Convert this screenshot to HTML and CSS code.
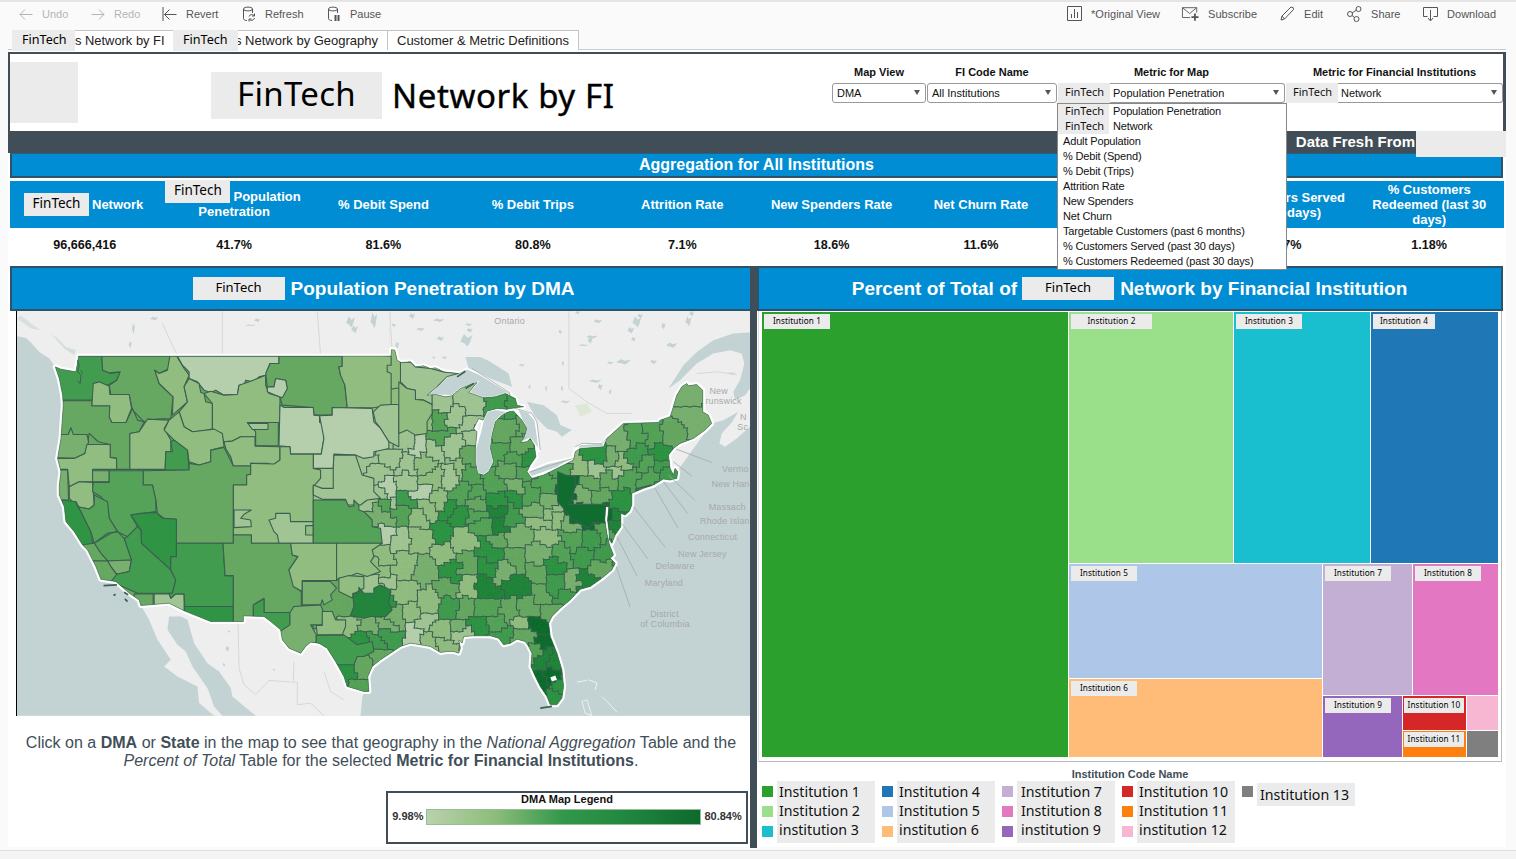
FILE: index.html
```html
<!DOCTYPE html>
<html lang="en">
<head>
<meta charset="utf-8">
<title>FinTech Network by FI</title>
<link rel="stylesheet" href="styles.css">
</head>
<body>
<header class="toolbar">
  <div class="tool off"><svg width="14" height="14" viewBox="0 0 14 14"><path d="M13.5 7.5H1M6 2.500L1 7.500L6 12.500"/></svg><span class="w-undo">Undo</span></div>
  <div class="tool off"><svg width="14" height="14" viewBox="0 0 14 14"><path d="M.5 7.500H13M8 2.500L13 7.500L8 12.500"/></svg><span class="w-redo">Redo</span></div>
  <div class="tool"><svg width="15" height="14" viewBox="0 0 15 14"><path d="M1 0V14M14.500 7.500H2.500M7.500 2.500L2.500 7.500L7.500 12.500"/></svg><span class="w-revert">Revert</span></div>
  <div class="tool"><svg width="14" height="16" viewBox="0 0 14 16"><path d="M5 14.500C2.500 14.500 1.500 13.500 1.500 12.500V3C1.500 .5 10.500 .5 10.500 3V7M1.500 3C1.500 5.500 10.500 5.500 10.500 3M7 10.500A3 3 0 0 1 12 9.500M12.500 7.500V10H10M12.500 12A3 3 0 0 1 7.500 13.500M7 15.500V13H9.500"/></svg><span class="w-refresh">Refresh</span></div>
  <div class="tool"><svg width="14" height="16" viewBox="0 0 14 16"><path d="M5 14.500C2.500 14.500 1.500 13.500 1.500 12.500V3C1.500 .5 10.500 .5 10.500 3V7M1.500 3C1.500 5.500 10.500 5.500 10.500 3"/><path class="fat" d="M8.500 9V15M11.500 9V15"/></svg><span>Pause</span></div>
  <div class="tools-right">
    <div class="tool"><svg width="15" height="15" viewBox="0 0 15 15"><path d="M.5 .5H14.500V14.500H.5ZM4.500 12V8M7.500 12V3M10.500 12V6"/></svg><span class="w-view">*Original View</span></div>
    <div class="tool"><svg width="17" height="15" viewBox="0 0 19 16"><path d="M9 12.500H.5V1.500H16.500V7M.5 1.500L8.500 8L16.500 1.500"/><path class="fat" d="M14.500 8V16M10.500 12H18.500"/></svg><span class="w-subscribe">Subscribe</span></div>
    <div class="tool"><svg width="15" height="15" viewBox="0 0 15 15"><path d="M1 14L2 10L11 1Q14 1 13.500 3.500L4.500 13ZM2 10L4.500 13"/></svg><span class="w-edit">Edit</span></div>
    <div class="tool"><svg width="15" height="16" viewBox="0 0 15 16"><circle cx="3" cy="8" r="2.500"/><circle cx="11.500" cy="3" r="2.500"/><circle cx="9.500" cy="13" r="2.500"/><path d="M5 7L9.500 4M5 9.500L7.500 11.500"/></svg><span class="w-share">Share</span></div>
    <div class="tool"><svg width="15" height="16" viewBox="0 0 15 16"><path d="M4.500 10.500H.5V1.500H14.500V10.500H10.500M7.500 4V14M5 12L7.500 15L10 12"/></svg><span>Download</span></div>
  </div>
</header>

<nav class="tabs">
  <a class="tab t1"><b>FinTech</b>s Network by FI</a>
  <a class="tab t2"><b>FinTech</b>s Network by Geography</a>
  <a class="tab t3">Customer &amp; Metric Definitions</a>
</nav>

<main class="board">
  <section class="head">
    <div class="logo"></div>
    <h1><span class="tag">FinTech</span><span class="ttl">Network by FI</span></h1>
    <div class="filters">
      <label class="f1">Map View<span class="select">DMA</span></label>
      <label class="f2">FI Code Name<span class="select">All Institutions</span></label>
      <label class="f3">Metric for Map<span class="select ft"><em>FinTech</em>Population Penetration</span></label>
      <label class="f4">Metric for Financial Institutions<span class="select ft"><em>FinTech</em>Network</span></label>
    </div>
    <ul class="menu">
      <li><em>FinTech</em>Population Penetration</li>
      <li><em>FinTech</em>Network</li>
      <li>Adult Population</li>
      <li>% Debit (Spend)</li>
      <li>% Debit (Trips)</li>
      <li>Attrition Rate</li>
      <li>New Spenders</li>
      <li>Net Churn</li>
      <li>Targetable Customers (past 6 months)</li>
      <li>% Customers Served (past 30 days)</li>
      <li>% Customers Redeemed (past 30 days)</li>
    </ul>
  </section>
  <div class="fresh"><span>Data Fresh From</span><i class="patch"></i></div>
  <h2 class="agg">Aggregation for All Institutions</h2>
  <div class="kpis names">
    <div class="withtag"><em>FinTech</em>Network</div>
    <div class="pop"><em>FinTech</em><span><s></s>Population<br>Penetration</span></div>
    <div>% Debit Spend</div>
    <div>% Debit Trips</div>
    <div>Attrition Rate</div>
    <div>New Spenders Rate</div>
    <div>Net Churn Rate</div>
    <div></div>
    <div>% Customers Served<br>(last 30 days)</div>
    <div>% Customers<br>Redeemed (last 30<br>days)</div>
  </div>
  <div class="kpis values">
    <div>96,666,416</div><div>41.7%</div><div>81.6%</div><div>80.8%</div><div>7.1%</div><div>18.6%</div><div>11.6%</div><div></div><div class="clip">7%</div><div>1.18%</div>
  </div>

  <div class="cols">
    <section class="left">
      <h3><em>FinTech</em>Population Penetration by DMA</h3>
      <svg class="map" id="map" viewBox="18 18 2202 1215" width="734" height="405"></svg>
      <p class="hint">Click on a <b>DMA</b> or <b>State</b> in the map to see that geography in the <i>National Aggregation</i> Table and the<br><i>Percent of Total</i> Table for the selected <b>Metric for Financial Institutions</b>.</p>
      <div class="legend">
        <h4>DMA Map Legend</h4>
        <div class="scale"><span>9.98%</span><i></i><span>80.84%</span></div>
      </div>
    </section>
    <section class="right">
      <h3>Percent of Total of<em>FinTech</em>Network by Financial Institution</h3>
      <div class="treebox">
        <div class="tree">
          <div class="c1"><span>Institution 1</span></div>
          <div class="c2"><span class="wide">Institution 2</span></div>
          <div class="c3"><span>Institution 3</span></div>
          <div class="c4"><span class="narrow">Institution 4</span></div>
          <div class="c5"><span>Institution 5</span></div>
          <div class="c6"><span>Institution 6</span></div>
          <div class="c7"><span>Institution 7</span></div>
          <div class="c8"><span>Institution 8</span></div>
          <div class="c9"><span>Institution 9</span></div>
          <div class="c10"><span>Institution 10</span></div>
          <div class="c11"><span>Institution 11</span></div>
          <div class="c12"></div>
          <div class="c13"></div>
        </div>
      </div>
      <h5>Institution Code Name</h5>
      <div class="codes">
        <div><ul><li class="c1"></li><li class="c2"></li><li class="c3"></li></ul><p>Institution 1<br>Institution 2<br>institution 3</p></div>
        <div><ul><li class="c4"></li><li class="c5"></li><li class="c6"></li></ul><p>Institution 4<br>Institution 5<br>institution 6</p></div>
        <div><ul><li class="c7"></li><li class="c8"></li><li class="c9"></li></ul><p class="inset">Institution 7<br>Institution 8<br>institution 9</p></div>
        <div><ul><li class="c10"></li><li class="c11"></li><li class="c12"></li></ul><p>Institution 10<br>Institution 11<br>institution 12</p></div>
        <div><ul><li class="c13"></li></ul><p class="one">Institution 13</p></div>
      </div>
    </section>
  </div>
</main>
<footer></footer>
<script src="map.js"></script>
</body>
</html>
```
FILE: styles.css
```css
* { box-sizing: border-box; margin: 0; padding: 0; }
body { width: 1516px; height: 859px; overflow: hidden; background: #fafafa; font-family: "Liberation Sans", Arial, sans-serif; color: #111; }
em { font-style: normal; font-family: "Noto Sans", sans-serif; }
ul { list-style: none; }

.toolbar { height: 30px; border-top: 2px solid #e4e4e4; display: flex; padding: 0 20px 5px 19px; align-items: center; font-size: 11px; color: #555; }
.tool { display: flex; align-items: center; gap: 9px; white-space: nowrap; }
.tool svg { fill: none; stroke: #555; stroke-width: 1; overflow: visible; }
.tool .fat { stroke-width: 2; }
.tool.off { color: #b5b5b5; }
.tool.off svg { stroke: #b5b5b5; }
.tool > span { display: block; margin-top: 1px; }
.w-undo { width: 49px; }
.w-redo { width: 50px; }
.w-revert { width: 56px; }
.w-refresh { width: 62px; }
.w-view { width: 91px; }
.w-subscribe { width: 72px; }
.w-edit { width: 43px; }
.w-share { width: 52px; }
.tool.off + .tool:not(.off) { margin-left: -2px; }
.tools-right { display: flex; margin-left: auto; }

.tabs { height: 20px; padding-left: 12px; display: flex; font-size: 13px; color: #222; }
.tab { display: flex; align-items: center; height: 20px; border: 1px solid #c4c4c4; border-width: 1px 1px 0 0; background: #fff; white-space: pre; }
.tab b { position: relative; z-index: 1; font: 12.600px "Noto Sans", sans-serif; background: #ebebeb; height: 21px; line-height: 19px; padding-left: 10px; width: 63px; color: #000; }
.t1 { width: 161px; border-right: 0; font-size: 12.900px; }
.t2 { width: 215px; }
.t2 b { width: 65px; margin-right: -3px; }
.t3 { width: 191px; padding-left: 9px; }

.board { width: 1498px; height: 798px; margin: -1px 0 0 8px; background: #fff; border-top: 1px solid #ccc; padding-top: 2px; }
.head { position: relative; height: 79px; border: solid #414e57; border-width: 2px 3px 0 2px; display: flex; }
.logo { width: 68px; height: 61px; margin-top: 8px; background: #ebebeb; }
h1 { display: flex; align-items: center; margin: 18px 0 0 133px; height: 47px; font: 33px "Noto Sans", sans-serif; color: #000; }
.tag { background: #ebebeb; width: 171px; height: 47px; line-height: 44px; padding-left: 26px; letter-spacing: .3px; }
.ttl { padding-left: 10px; line-height: 44px; white-space: nowrap; letter-spacing: .6px; -webkit-text-stroke: .4px; }
.filters { position: absolute; left: 822px; top: 12px; display: flex; gap: 1px; }
.filters label { font-weight: bold; font-size: 11px; line-height: 13px; text-align: center; color: #111; }
.select { display: flex; align-items: center; margin-top: 4px; height: 20px; border: 1px solid #999; border-radius: 3px; background: #fff; padding-left: 4px; font-weight: normal; white-space: nowrap; }
.select::after { content: ""; margin: 0 5px 2px auto; border: solid transparent; border-width: 5px 3.500px 0; border-top-color: #555; }
.select.ft { padding-left: 0; border-left: 0; }
.select em { font-size: 11px; align-self: stretch; width: 52px; background: #ebebeb; text-align: left; padding: 1px 0 0 7px; margin: -1px 3px -1px 0; line-height: 15px; }
.f1 { width: 94px; }
.f2 { width: 130px; }
.f3 { width: 227px; }
.f4 { width: 217px; }
.menu { position: absolute; z-index: 5; left: 1047px; top: 49px; width: 230px; height: 167px; background: #fff; border: 1px solid #888; font-size: 11px; line-height: 15px; padding-left: 5px; white-space: nowrap; letter-spacing: -.15px; }
.menu li { height: 15px; display: flex; }
.menu em { width: 51px; margin: 0 4px 0 -5px; padding-left: 7px; background: #ebebeb; line-height: 13px; letter-spacing: 0; }

.fresh { height: 22px; background: #414e57; display: flex; justify-content: flex-end; color: #fff; font: bold 15px/21px "Liberation Sans", sans-serif; }
.patch { position: relative; z-index: 2; height: 26px; width: 90px; background: #ebebeb; margin-left: 1px; }
.agg { margin: 0 3px 0 2px; height: 25px; border: 2px solid #2d5369; border-top: 1px solid #28617f; background: #018dd3; color: #fff; text-align: center; font-size: 16px; line-height: 21px; }
.kpis { margin: 3px 2px 0; display: grid; grid-template-columns: repeat(10, 149.400px); font-weight: bold; font-size: 13px; text-align: center; line-height: 15px; align-items: center; }
.names { height: 47px; background: #018dd3; color: #fff; position: relative; }
.names em { display: inline-block; width: 65px; height: 23px; background: #ebebeb; color: #000; font: 13.500px/20px "Noto Sans", sans-serif; }
.withtag { display: flex; gap: 3px; padding-left: 14px; align-items: center; white-space: nowrap; }
.pop { position: relative; height: 47px; padding-top: 8px; }
.pop em { position: absolute; left: 6px; top: -1px; }
.pop s { display: inline-block; width: 66px; }
.values { height: 37px; margin-top: 0; font-size: 12.600px; color: #111; padding-bottom: 3px; }
.clip { padding-left: 25px; }

.cols { display: flex; margin: 1px 3px 0 2px; height: 582px; }
.cols h3 { height: 45px; background: #018dd3; border: 2px solid #2d5369; color: #fff; font-size: 19px; display: flex; align-items: center; justify-content: center; white-space: nowrap; }
.cols h3 em { font-size: 13px; font-weight: normal; background: #ebebeb; color: #000; width: 92px; height: 23px; line-height: 20px; text-align: center; margin: 0 6px 0 5px; }
.left { width: 747px; border-right: 7px solid #414e57; }
.left h3 { border-right: 0; padding-left: 0; }
.map { display: block; margin-left: 6px; background: #eee; border-left: 1px solid #000; }
.hint { margin-top: 17px; padding-left: 2px; text-align: center; font-size: 16.050px; line-height: 18px; color: #414e57; white-space: nowrap; }
.legend { width: 362px; height: 53px; margin: 22px 2px 0 auto; border: 2px solid #414e57; text-align: center; }
.legend h4 { font-size: 11px; line-height: 13px; }
.scale { display: flex; font-size: 11px; line-height: 15px; justify-content: center; font-weight: bold; gap: 3px; margin-top: 3px; color: #333; }
.scale i { width: 275px; height: 16px; border: 1px solid #9b9; background: linear-gradient(90deg, #b9d2ac, #8cbd7a 25%, #31974a 50%, #238a41 70%, #0d6a2d); }

.right { width: 746px; }
.right h3 { padding-right: 1px; }
.treebox { height: 451px; margin: 0 1px; padding: 1px 3px 0; border: 1px solid #bbb; border-top: 0; border-left-color: #ddd; }
.tree { height: 445px; width: 736px; display: grid; gap: 1px; grid-template-columns: 306px 164px 88px 47px 31px 9px 53px 31px; grid-template-rows: 251px 114px 16px 34px 26px; }
.tree > div { padding: 2px; overflow: hidden; }
.tree span { display: block; width: 66px; height: 15px; background: #ebebeb; font: 8.200px/13px "Noto Sans", sans-serif; letter-spacing: .1px; color: #000; text-align: center; white-space: nowrap; }
.tree .wide { width: 81px; }
.tree .narrow { width: 62px; }
.c1 { background: #2ca02c; }
.c2 { background: #9adf8a; }
.c3 { background: #1abfcf; }
.c4 { background: #2077b5; }
.c5 { background: #aec6e7; }
.c6 { background: #ffbb78; }
.c7 { background: #c4afd4; }
.c8 { background: #e377c2; }
.c9 { background: #9467bd; }
.c10 { background: #d62728; }
.c11 { background: #ff7f0e; }
.c12 { background: #f7b6d2; }
.c13 { background: #7f7f7f; }
.tree .c1 { grid-area: 1 / 1 / 6 / 2; }
.tree .c2 { grid-area: 1 / 2; }
.tree .c3 { grid-area: 1 / 3 / 2 / 5; }
.tree .c4 { grid-area: 1 / 5 / 2 / 9; }
.tree .c5 { grid-area: 2 / 2 / 3 / 4; }
.tree .c6 { grid-area: 3 / 2 / 6 / 4; }
.tree .c7 { grid-area: 2 / 4 / 4 / 7; }
.tree .c8 { grid-area: 2 / 7 / 4 / 9; }
.tree .c9 { grid-area: 4 / 4 / 6 / 6; }
.tree .c10 { grid-area: 4 / 6 / 5 / 8; padding: 2px 1px; }
.tree .c11 { grid-area: 5 / 6 / 6 / 8; padding: 1px; }
.tree .c10 span, .tree .c11 span { width: 60px; }
.tree .c12 { grid-area: 4 / 8; }
.tree .c13 { grid-area: 5 / 8; }
.right h5 { font-size: 11px; line-height: 13px; margin-top: 6px; color: #414e57; text-align: center; }
.codes { display: flex; padding-left: 5px; margin-top: -1px; }
.codes > div { width: 120px; display: flex; gap: 4px; }
.codes ul { padding-top: 6px; }
.codes li { width: 11px; height: 11px; margin-bottom: 9px; }
.codes p { width: 98px; height: 62px; margin-top: 1px; padding-left: 2px; background: #ebebeb; font: 14.200px/19.700px "Noto Sans", sans-serif; line-height: 19px; padding-top: 1px; white-space: nowrap; color: #111; }
.codes .inset { padding-left: 4px; }
.codes .one { height: 23px; margin-top: 3px; padding-left: 3px; line-height: 21px; }
footer { height: 10px; margin-top: 3px; border-top: 1px solid #ddd; background: #f4f4f4; }

.land-halo { fill: #fff; stroke: #fff; stroke-width: 15; stroke-linejoin: round; }
.water { fill: #c3d2d3; }
.lake { fill: #c3d2d3; stroke: #fff; stroke-width: 5; }
.edge { fill: none; stroke: #3b5f50; stroke-width: 3; stroke-linejoin: round; }
.dma { stroke: #3b5f50; stroke-width: 3.300; stroke-linejoin: round; }
.leader { fill: none; stroke: #a3acac; stroke-width: 2.500; }
.border-line { fill: none; stroke: #d6d8d8; stroke-width: 3; }
.place { fill: #a6aaab; font: 27px "Liberation Sans", sans-serif; letter-spacing: .5px; }
```
FILE: map.js
```js
// Map units are thirds of a pixel.
var svg = document.getElementById('map');
var fills = ['#b5cfac', '#a0c493', '#92bd80', '#79b070', '#66a862', '#55a358', '#429c4f', '#2f9444', '#22853b', '#0f6d2f'];

function pts(text, dx, dy) {
  return text.trim().split(/\s+/).map(function (p) {
    var q = p.split(',');
    return [+q[0] + (dx || 0), +q[1] + (dy || 0)];
  });
}
function path(list, open) { return 'M' + list.map(function (p) { return p.join(' '); }).join('L') + (open ? '' : 'Z'); }
var out = '';
function draw(d, cls, extra) { out += '<path class="' + cls + '" d="' + d + '" ' + (extra || '') + '/>'; }

// Coastline and land borders of the lower 48, clockwise from Puget Sound.
var usa = pts('203,153 1140,153')
  .concat(pts('32,150 33,133 43,135 50,165 62,172 90,170 105,185 130,182 150,190 165,188 190,200 235,205 200,215 175,240 140,270 165,268 195,275 215,272 240,250 270,238 290,232 265,262 310,278 345,275 375,265 405,280 410,300 430,305 410,307 380,312 350,310 320,318 308,345 295,340 280,370 290,380 285,430 285,470 292,505 310,510 325,500 340,470 330,430 335,390 345,350 365,330 385,320 400,318 425,345 440,370 430,400 420,412 440,410 450,400 462,420 467,455 450,480 440,500 455,520 490,510 530,490 580,465 585,440 600,430 670,425 680,400 730,355 835,352 840,345 870,335 875,320 890,270 905,245 920,235 925,242 950,238 968,255 968,320 985,330 995,355 975,375 940,400 900,415 880,430 865,450 870,490 880,510 885,490 893,500 890,520 870,525 850,522 820,540 790,550 755,565 755,600 748,618 735,630 722,625', 1110, 0))
  .concat(pts('722,45 722,80 705,105 695,130 688,120 686,90 682,60 686,20 676,20 674,60 680,100 688,135 700,165 690,175 705,190 695,210 665,235 630,260 600,268 570,300 540,325 515,350 505,370 510,410 530,460 545,510 550,560 545,595 530,615 510,615 500,590 480,560 465,530 452,500 455,460 445,440 435,425 410,418 390,430 370,435 355,415 330,408 280,408 250,410 245,430 235,420 240,445 235,460 220,455 200,455 180,458 150,440 120,435 90,430 60,440 30,460', 1110, 585))
  .concat(pts('1110,480 1085,500 1072,530 1075,575 1060,575 1010,560 1000,530 975,485 950,445 925,430 900,427 885,440 870,460 835,445 815,420 810,390 780,365 760,350 698,348 698,365 600,365 520,333 475,310 390,317 385,300 355,280 315,245 270,238 255,200 230,150 215,135 190,95 165,65 160,20', 0, 585))
  .concat(pts('145,570 145,540 150,500 140,460 150,400 157,300 155,270 145,220 133,185 150,192 195,200'));
out += '<defs><clipPath id="us"><path d="' + path(usa) + '"/></clipPath></defs>';

// Oceans and large bodies of water
draw(path(pts('18,93 45,98 62,115 85,140 115,160 133,185 300,500 400,900 390,902 415,945 440,1005 480,1065 460,1085 500,1115 560,1145 565,1195 610,1233 18,1233')), 'water');
draw(path(pts('475,935 510,935 530,945 550,1015 590,1075 625,1100 660,1150 665,1175 735,1233 635,1233 610,1205 590,1150 545,1085 525,1040 500,1020 470,975')), 'water');
draw(path(pts('1072,1115 1200,800 2000,500 2105,355 2140,345 2185,320 2165,352 2135,385 2128,415 2145,425 2180,400 2220,365 2220,1233 1050,1233 1055,1180')), 'water');
draw(path(pts('2220,82 2170,85 2110,105 2060,140 2020,180 1975,250 2010,225 2060,175 2110,145 2160,135 2195,145 2203,175 2190,225 2170,260 2175,285 2205,270 2220,250')), 'water');
draw(path(pts('1365,155 1410,155 1440,170 1495,205 1505,245 1440,220 1375,190')), 'water');
draw(path(pts('1550,290 1600,300 1640,330 1650,360 1685,375 1655,395 1640,380 1610,370 1575,335')), 'water');
draw(path(pts('18,40 60,70 90,75 60,55 30,30')), 'water', 'opacity=".5"');
draw(path(pts('120,85 160,130 190,150 195,135 165,125 140,100')), 'water', 'opacity=".6"');

// Scattered northern lakes: x, y, width, height
'368,70,9,35 358,118,9,22 740,45,18,12 720,60,36,5 1020,50,26,34 1032,72,20,24 1090,45,20,50 1205,32,18,18 1230,72,26,10 1285,45,34,10 1290,100,22,14 1378,75,18,14 1368,105,36,38 1375,58,22,8 1270,157,10,8 1302,157,16,8 1535,180,20,8 1650,80,10,14 1763,48,26,12 1745,95,36,10 1740,105,14,22 1840,170,44,16 1800,173,20,8 1880,50,26,34 1862,75,20,20 1870,102,14,14 1930,170,20,14 1985,120,34,16 1960,62,12,22 2035,48,18,30 2045,25,14,18 1755,228,38,10 1770,245,14,20 1658,175,8,16 1608,250,6,20 1702,22,14,10 1558,245,8,14 1655,250,7,18 1665,290,30,8 1800,260,9,16 1720,120,30,6 1160,120,12,22 1150,60,14,10 2165,205,24,8 655,980,8,8 650,1032,12,18 640,1080,8,12 790,1095,10,6 430,40,24,12 1890,32,16,14'.split(' ').forEach(function (s) {
  var q = s.split(',').map(Number), x = q[0], y = q[1], w = q[2] / 2, h = q[3] / 2;
  draw('M' + [x - w, y + h * .2] + 'L' + [x - w * .4, y - h] + 'L' + [x + w * .2, y - h * .4] + 'L' + [x + w, y - h * .8] + 'L' + [x + w * .6, y + h * .3] + 'L' + [x + w * .2, y + h] + 'L' + [x - w * .3, y + h * .5] + 'Z', 'water');
});
draw('M635 18V150M455 55L480 110L500 150M920 18L930 150M1138 18L1145 140M1676 18V250L1730 290L1790 325L1865 325M2060 205L2120 200L2180 208M682 950L685 1090L700 1140L735 1170L775 1127L860 1133L860 1200L900 1195L940 1233M850 1070L848 1130M940 1100L960 1160L1000 1185', 'border-line');
draw('M1695 300L1730 295L1745 320L1710 335ZM1135 60L1142 55L1138 120Z', '', 'fill="#dfe8d6"');

draw(path(usa), 'land-halo');
// Great Lakes along the northern edge
draw(path(pts('140,270 200,215 260,190 300,208 390,262 400,275 375,265 345,275 310,278 265,262 290,232 240,250 215,272', 1110, 0)), 'lake');
draw(path(pts('320,318 350,312 385,320 365,330 345,350 335,390 330,430 340,470 325,500 310,510 292,505 285,470 285,430 300,380 308,345', 1110, 0)), 'lake');
draw(path(pts('410,310 445,322 465,345 478,440 462,415 450,400 420,412 440,370 425,345', 1110, 0)), 'lake');
draw(path(pts('440,500 500,475 585,455 530,488 455,515', 1110, 0)), 'lake');
draw(path(pts('585,430 600,418 670,412 670,425 600,430', 1110, 0)), 'lake');
draw('M1385 190L1498 262V275M1510 308L1565 325L1580 350L1590 435M1560 500L1690 460M1695 425L1715 415H1775L1795 395', 'leader');

// Market areas east of the plains: x, y, shade
var seeds = [];
function sow(text, dx, dy) {
  text.split(' ').forEach(function (s) { var q = s.split(',').map(Number); seeds.push([q[0] + dx, q[1] + dy, q[2]]); });
}
sow('110,210,1 50,300,2 90,310,2 130,340,2 180,285,1 270,285,1 350,285,6 400,290,6 215,330,1 170,350,5 175,390,5 255,350,1 270,390,1 215,420,1 60,400,1 20,400,1 115,410,0 150,425,1 20,450,1 75,475,1 75,530,1 130,470,2 150,510,2 200,510,1 230,490,2 265,440,4 260,500,5 120,555,0 10,540,0 160,580,2 240,560,5 60,585,6 35,595,1 110,630,2 200,620,7 290,560,5 340,590,7 290,620,5 400,580,7 405,545,3 380,370,4 355,440,5 425,355,4 410,420,4 395,460,5 445,450,7 370,500,4 330,530,5 430,510,5 480,540,5 440,560,5 505,580,3 450,620,3 530,625,2 558,535,9 558,580,9 545,505,5 600,480,2 635,450,7 645,490,1 690,450,3 718,465,2 700,490,1 705,390,3 770,385,5 810,385,5 755,445,6 800,475,5 835,440,7 840,480,6 800,510,5 850,505,6 865,385,4 930,330,3 925,260,3 745,520,5 670,515,4 640,530,4 605,570,3 650,575,4 720,585,7 620,630,9 660,620,9 580,630,9 700,640,8', 1110, 0);
sow('10,40,3 60,40,5 130,30,2 40,115,1 15,170,2 120,110,2 215,45,7 180,90,7 285,25,4 300,75,5 350,75,8 345,30,8 400,40,6 345,120,4 410,100,3 470,65,2 520,30,2 490,110,2 560,60,3 565,120,5 630,110,6 660,85,5 615,35,9 655,35,9 700,60,8 240,120,2 180,165,2 130,200,3 65,190,2 60,270,2 210,210,7 200,265,4 250,260,2 260,185,4 320,155,7 310,185,7 310,260,8 410,250,8 400,170,4 375,200,3 460,220,4 465,145,3 525,195,7 540,160,5 600,170,6 660,195,4 670,150,6 570,240,3 605,240,8 520,255,6 480,280,4 550,280,6 440,320,4 380,330,4 315,320,5 250,320,4 200,320,6 145,310,2 80,330,2 35,350,3 20,400,6 -20,430,6 100,400,0 125,370,1 170,390,2 140,410,2 200,430,2 230,370,3 240,400,1 285,370,7 345,360,5 360,395,6 425,355,2 425,400,4 500,330,4 480,375,9 490,410,9 455,450,5 485,470,8 525,480,8 480,540,9 500,530,9 535,550,7 530,595,7 5,300,7 20,240,1', 1110, 585);
sow('1050,470,1 1100,500,1 1090,560,1 1130,600,5 1125,690,0 1000,895,4 1060,955,3 1045,985,7 1050,1080,4 1000,1100,7 1040,1150,5 1090,1045,4 1110,790,2 1080,830,1 1010,960,2 1130,960,3 1140,180,2', 0, 0);

// Counties sit on a square grid, which gives the areas their stair-like edges.
var step = 9, x0 = 870, y0 = 125, nx = 142, ny = 123, own = [];
function jitter(a, b, k) {
  var v = Math.sin(a * 127.1 + b * 311.7 + k * 74.7) * 43758.5453;
  return v - Math.floor(v) - .5;
}
function owner(i, j) {
  var bi = Math.floor(i / 2), bj = Math.floor((j + (bi % 2)) / 2);
  var wx = x0 + i * step + 22 * jitter(bi, bj, 1);
  var wy = y0 + j * step + 22 * jitter(bi, bj, 2);
  var best = 0, bd = 1e9;
  for (var s = 0; s < seeds.length; s++) {
    var dx = Math.abs(seeds[s][0] - wx), dy = Math.abs(seeds[s][1] - wy);
    var d = Math.pow(dx, 2.6) + Math.pow(dy, 2.6);
    if (d < bd) { bd = d; best = s; }
  }
  return best;
}
for (var j = 0; j < ny; j++) {
  own.push([]);
  for (var i = 0; i < nx; i++) own[j].push(owner(i, j));
}
// Absorb stray cells into the area around them.
for (var pass = 0; pass < 3; pass++) {
  for (j = 1; j < ny - 1; j++) {
    for (i = 1; i < nx - 1; i++) {
      var around = [own[j - 1][i], own[j + 1][i], own[j][i - 1], own[j][i + 1]];
      if (around.filter(function (v) { return v === own[j][i]; }).length < 2) {
        var pick = around.filter(function (v, n) { return around.indexOf(v) !== n; })[0];
        if (pick !== undefined) own[j][i] = pick;
      }
    }
  }
}
var nodes = [];
for (j = 0; j <= ny; j++) {
  nodes.push([]);
  for (i = 0; i <= nx; i++) nodes[j].push([(x0 + i * step + 4 * jitter(i, j, 5)).toFixed(1), (y0 + j * step + 4 * jitter(i, j, 6)).toFixed(1)]);
}
var areas = fills.map(function () { return ''; }), edges = '';
for (j = 0; j < ny; j++) {
  for (i = 0; i < nx; i++) {
    var a = nodes[j][i], b = nodes[j][i + 1], c = nodes[j + 1][i + 1], e = nodes[j + 1][i];
    if (i + 1 < nx && own[j][i] !== own[j][i + 1]) edges += 'M' + b + 'L' + c;
    if (j + 1 < ny && own[j][i] !== own[j + 1][i]) edges += 'M' + e + 'L' + c;
    areas[seeds[own[j][i]][2]] += 'M' + a + 'L' + b + 'L' + c + 'L' + e + 'Z';
  }
}
out += '<g clip-path="url(#us)"><rect x="100" y="120" width="2100" height="1100" fill="#66a862"/>';
areas.forEach(function (d, k) { if (d) draw(d, '', 'fill="' + fills[k] + '" stroke="' + fills[k] + '"'); });
draw(edges, 'edge', 'stroke-linecap="round"');

// Western market areas
[
  [6, '203,153 273,153 275,195 300,205 328,200 318,225 290,240 255,232 243,285 157,285 120,285 120,150'],
  [4, '273,153 477,153 475,190 445,205 432,195 445,235 487,275 480,340 440,342 400,350 365,315 355,268 300,268 295,240 318,225 328,200 295,203 275,195'],
  [4, '157,287 243,287 243,302 297,302 297,335 303,352 345,352 365,310 380,345 400,350 385,380 357,385 357,493 317,493 317,460 298,457 298,418 262,410 235,385 230,415 228,388 185,388 180,370 172,388 140,390 140,287'],
  [2, '247,235 265,230 295,243 297,268 355,268 362,310 345,352 303,352 295,335 297,302 243,302'],
  [3, '130,388 172,388 180,368 187,388 228,388 233,410 222,445 190,460 130,458'],
  [2, '130,460 190,460 222,445 228,418 298,418 298,457 317,460 317,493 245,493 245,530 205,530 175,545 170,493 130,493'],
  [3, '245,497 295,497 295,530 245,530'],
  [3, '130,495 170,495 173,585 130,585'],
  [2, '175,545 205,530 245,532 250,600 235,612 200,605 175,580'],
  [2, '357,385 385,380 410,342 475,345 460,370 480,405 480,440 465,440 463,493 357,493'],
  [2, '477,153 498,153 520,190 535,210 520,245 530,290 485,330 487,275 445,235 432,195 445,205 470,195'],
  [0, '500,153 805,153 805,175 778,175 765,210 745,215 735,225 720,228 705,225 700,240 685,240 680,268 640,270 615,255 600,262 580,255 560,230 535,220 535,200 515,180'],
  [2, '535,220 565,235 570,262 580,265 585,290 605,295 605,372 575,378 545,380 520,365 505,320 530,290 520,245'],
  [2, '600,258 640,270 680,268 685,240 720,228 765,210 765,240 775,265 808,275 808,352 710,352 735,375 735,395 690,395 665,408 640,410 630,385 605,372 605,295 580,265'],
  [2, '475,345 505,320 520,365 545,380 610,372 635,385 640,425 600,435 600,470 565,480 535,470 530,435 490,405 460,375'],
  [6, '465,440 485,440 480,410 490,405 530,435 535,495 463,495'],
  [4, '805,153 995,153 995,183 985,185 990,210 1003,213 1003,240 1010,307 965,307 965,330 910,330 908,307 815,300 808,275 830,250 825,225 795,220 790,245 770,245 765,205 778,175 805,175'],
  [0, '770,245 790,245 795,220 825,225 830,250 815,278 795,270 770,260'],
  [2, '995,140 1142,153 1142,180 1130,180 1130,200 1142,205 1142,298 1090,308 1010,307 1003,240 990,210 985,185 995,183'],
  [1, '1110,300 1142,298 1165,298 1165,425 1135,410 1110,370 1095,350 1088,320'],
  [1, '1170,172 1200,170 1215,185 1260,190 1300,200 1345,205 1310,215 1285,240 1265,268 1265,298 1240,285 1215,283 1215,255 1190,250 1170,230'],
  [2, '1165,230 1190,250 1215,255 1215,283 1240,285 1265,298 1265,325 1250,350 1250,385 1215,390 1190,375 1165,385'],
  [0, '808,300 820,307 908,307 910,330 927,332 927,352 940,355 940,400 932,447 840,447 838,425 805,422'],
  [3, '710,352 803,352 803,422 735,422 735,380'],
  [1, '712,355 772,355 772,373 725,373'],
  [2, '640,410 665,408 690,395 733,395 733,423 808,425 808,465 790,480 770,475 720,475 720,483 668,483 660,455 645,430'],
  [0, '927,332 965,330 965,307 1085,310 1090,350 1110,370 1135,410 1135,430 1090,440 1090,455 1060,460 1035,450 970,447 968,490 908,490 908,447 932,447 940,400'],
  [4, '535,475 565,480 600,470 600,435 640,427 668,483 720,483 720,508 708,510 708,540 668,540 668,715 497,715 497,643 460,640 440,625 435,585 425,540 397,540 397,497 535,495'],
  [2, '720,475 790,477 808,465 808,425 838,425 840,447 908,447 908,490 930,495 930,520 908,545 908,715 722,715 722,690 668,690 668,540 708,540 708,510 720,508'],
  [1, '670,615 722,615 700,628 690,640 720,645 722,665 670,668'],
  [1, '775,645 795,640 795,625 838,625 840,650 908,650 908,715 805,715 800,690 790,680'],
  [2, '885,662 908,662 908,690 885,690'],
  [1, '970,450 1035,450 1045,480 1055,510 1090,520 1090,560 1110,580 1070,585 1050,600 1010,600 1005,583 935,583 908,570 908,540 935,550 968,550 968,490'],
  [5, '908,585 1005,585 1015,605 1030,603 1030,585 1045,600 1045,615 1060,620 1085,645 1085,665 1110,670 1115,715 908,715'],
  [5, '295,497 397,497 397,540 425,540 435,585 435,620 360,630 380,665 350,695 320,680 295,640 290,600 270,575 245,560 247,532 295,532'],
  [7, '360,630 390,625 435,622 455,640 497,643 497,755 480,755 480,795 430,750 392,715 390,675'],
  [7, '155,585 195,590 215,630 240,680 245,715 215,725 180,690 150,650'],
  [5, '195,590 200,605 235,612 250,600 250,570 290,590 295,640 320,680 290,685 250,715 240,680 215,630'],
  [5, '250,715 300,685 320,680 340,700 362,765 290,768 270,745'],
  [4, '210,720 250,715 270,745 290,768 240,768'],
  [3, '290,768 362,765 355,800 318,808 300,785'],
  [4, '240,768 290,768 300,785 318,810 315,835 260,830'],
  [6, '350,695 380,665 390,675 392,715 430,750 480,795 495,825 485,865 430,865 380,865 300,830 318,808 355,800 362,765 340,700'],
  [4, '370,867 427,867 427,905 370,905'],
  [1, '430,867 475,867 480,880 495,867 520,867 520,925 430,925'],
  [6, '497,715 637,715 640,770 643,812 668,812 668,905 522,905 520,867 495,867 480,880 475,865 485,865 495,825 480,795 480,755 497,755'],
  [7, '522,905 668,905 668,960 600,960 520,930'],
  [4, '637,715 668,715 668,690 722,690 722,715 840,715 845,750 862,755 835,795 850,845 872,860 872,905 850,905 840,923 760,923 760,880 728,900 728,955 668,955 668,812 643,812'],
  [6, '728,900 760,882 760,923 838,923 838,960 800,1000 700,960 728,945'],
  [2, '840,715 978,715 978,827 875,827 875,860 848,845 835,795 862,755 845,750'],
  [3, '875,830 960,830 978,850 960,870 965,885 940,900 935,885 930,900 875,900'],
  [3, '838,923 850,905 930,900 938,920 935,960 900,960 917,990 917,1010 890,1060 800,1060 800,985 838,960'],
  [2, '978,715 1115,715 1085,735 1090,755 1080,770 1110,800 1070,815 1040,805 1015,815 985,820 978,827'],
  [2, '985,820 1015,812 1060,815 1060,850 1027,868 1027,880 985,860'],
  [2, '935,920 965,920 975,945 1005,945 1005,965 995,990 920,990 917,962 935,962'],
  [6, '917,992 1000,990 1020,1005 1040,1020 1085,1010 1090,1040 1060,1055 1040,1055 1030,1080 970,1080 917,1030'],
  [8, '1027,865 1045,865 1045,847 1060,865 1090,865 1090,850 1110,840 1140,855 1135,895 1145,915 1125,935 1080,935 1060,940 1020,932 1030,905'],
  // Western New York to Washington, D.C.
  [9, '1642,500 1665,510 1695,515 1695,545 1685,580 1675,598 1790,598 1785,625 1790,655 1750,652 1735,670 1705,655 1680,635 1660,610 1642,590']
].forEach(function (a) { draw(path(pts(a[1])), 'dma', 'fill="' + fills[a[0]] + '"'); });
out += '</g>';
draw(path(usa), 'edge', 'stroke-opacity=".55"');
draw('M200 165L205 180L200 200L210 210L208 235L200 228M210 195L215 205', 'edge');
draw('M1620 1118L1635 1112L1640 1125L1625 1130Z', '', 'fill="#fff"');
draw('M278 842L318 840M308 872L314 868M340 862L352 870M342 882L350 890M1590 1210L1625 1205M1875 553L1925 540M1340 215L1365 198M1365 250L1390 235', '', 'stroke="#3b5f50" stroke-width="5"');
draw('M1700 1132L1730 1127M1735 1125L1760 1135L1755 1155M1715 1190L1730 1185L1745 1233L1725 1225ZM1775 1175L1790 1190L1820 1222', 'edge', 'style="stroke:#eef1f0"');

draw('M1998 432L2105 472M1990 470L2045 513M1975 510L2055 587M1960 530L2033 626M1935 550L2003 668M1870 605L1965 727M1835 655L1913 762M1820 695L1880 812M1818 785L1860 907', 'leader');
[
  ['Ontario', 1452, 56], ['New', 2098, 267], ['runswick', 2086, 297], ['N', 2190, 346], ['Sc', 2182, 376],
  ['Vermo', 2136, 501], ['New Han', 2104, 546], ['Massach', 2096, 615], ['Rhode Islan', 2070, 657],
  ['Connecticut', 2034, 705], ['New Jersey', 2004, 757], ['Delaware', 1936, 792], ['Maryland', 1904, 844],
  ['District', 1920, 936], ['of Columbia', 1890, 966]
].forEach(function (t) { out += '<text class="place" x="' + t[1] + '" y="' + t[2] + '">' + t[0] + '</text>'; });
svg.innerHTML = out;
```
